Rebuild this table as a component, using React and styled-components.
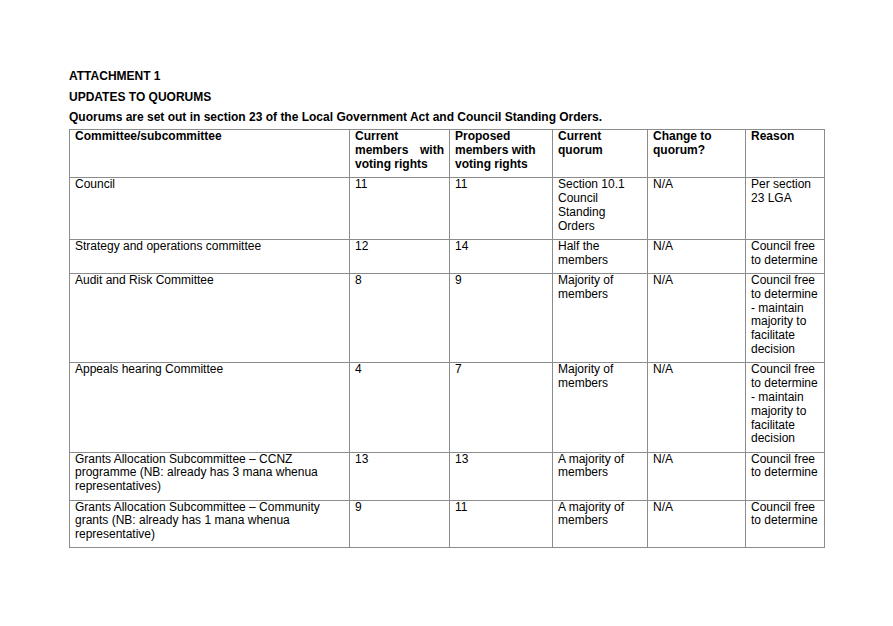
import React from "react";
import styled, { createGlobalStyle } from "styled-components";

const Global = createGlobalStyle`
  html, body { margin: 0; padding: 0; background: #ffffff; }
  body { font-family: "Liberation Sans", Arial, sans-serif; color: #000; }
`;

const Page = styled.div`
  width: 893px;
  min-height: 626px;
  box-sizing: border-box;
  padding: 70px 0 0 69px;
  font-size: 12px;
  line-height: 13.8px;
`;

const Heading = styled.p`
  margin: 0 0 ${(p) => p.$gap || 7}px;
  font-weight: bold;
`;

const Table = styled.table`
  border-collapse: collapse;
  table-layout: fixed;
  width: 755px;
`;

const Cell = styled.td`
  border: 1px solid #8c8c8c;
  padding: 0 5px 5.5px 5px;
  vertical-align: top;
  text-align: ${(p) => (p.$justify ? "justify" : "left")};
  font-weight: ${(p) => (p.$head ? "bold" : "normal")};
`;

const cols = [280, 100, 103, 95, 98, 79];

const header = [
  "Committee/subcommittee",
  "Current members with voting rights",
  "Proposed members with voting rights",
  "Current quorum",
  "Change to quorum?",
  "Reason",
];

const rows = [
  ["Council", "11", "11", "Section 10.1 Council Standing Orders", "N/A", "Per section 23 LGA"],
  ["Strategy and operations committee", "12", "14", "Half the members", "N/A", "Council free to determine"],
  [
    "Audit and Risk Committee",
    "8",
    "9",
    "Majority of members",
    "N/A",
    "Council free to determine - maintain majority to facilitate decision",
  ],
  [
    "Appeals hearing Committee",
    "4",
    "7",
    "Majority of members",
    "N/A",
    "Council free to determine - maintain majority to facilitate decision",
  ],
  [
    "Grants Allocation Subcommittee \u2013 CCNZ programme (NB: already has 3 mana whenua representatives)",
    "13",
    "13",
    "A majority of members",
    "N/A",
    "Council free to determine",
  ],
  [
    "Grants Allocation Subcommittee \u2013 Community grants (NB: already has 1 mana whenua representative)",
    "9",
    "11",
    "A majority of members",
    "N/A",
    "Council free to determine",
  ],
];

export default function App() {
  return (
    <>
      <Global />
      <Page>
        <Heading $gap={7}>ATTACHMENT 1</Heading>
        <Heading $gap={6}>UPDATES TO QUORUMS</Heading>
        <Heading $gap={5}>
          Quorums are set out in section 23 of the Local Government Act and Council Standing Orders.
        </Heading>
        <Table>
          <colgroup>
            {cols.map((w, i) => (
              <col key={i} style={{ width: w }} />
            ))}
          </colgroup>
          <thead>
            <tr>
              {header.map((h, i) => (
                <Cell as="th" key={i} $head $justify={i === 1}>
                  {h}
                </Cell>
              ))}
            </tr>
          </thead>
          <tbody>
            {rows.map((r, ri) => (
              <tr key={ri}>
                {r.map((c, ci) => (
                  <Cell key={ci}>{c}</Cell>
                ))}
              </tr>
            ))}
          </tbody>
        </Table>
      </Page>
    </>
  );
}
